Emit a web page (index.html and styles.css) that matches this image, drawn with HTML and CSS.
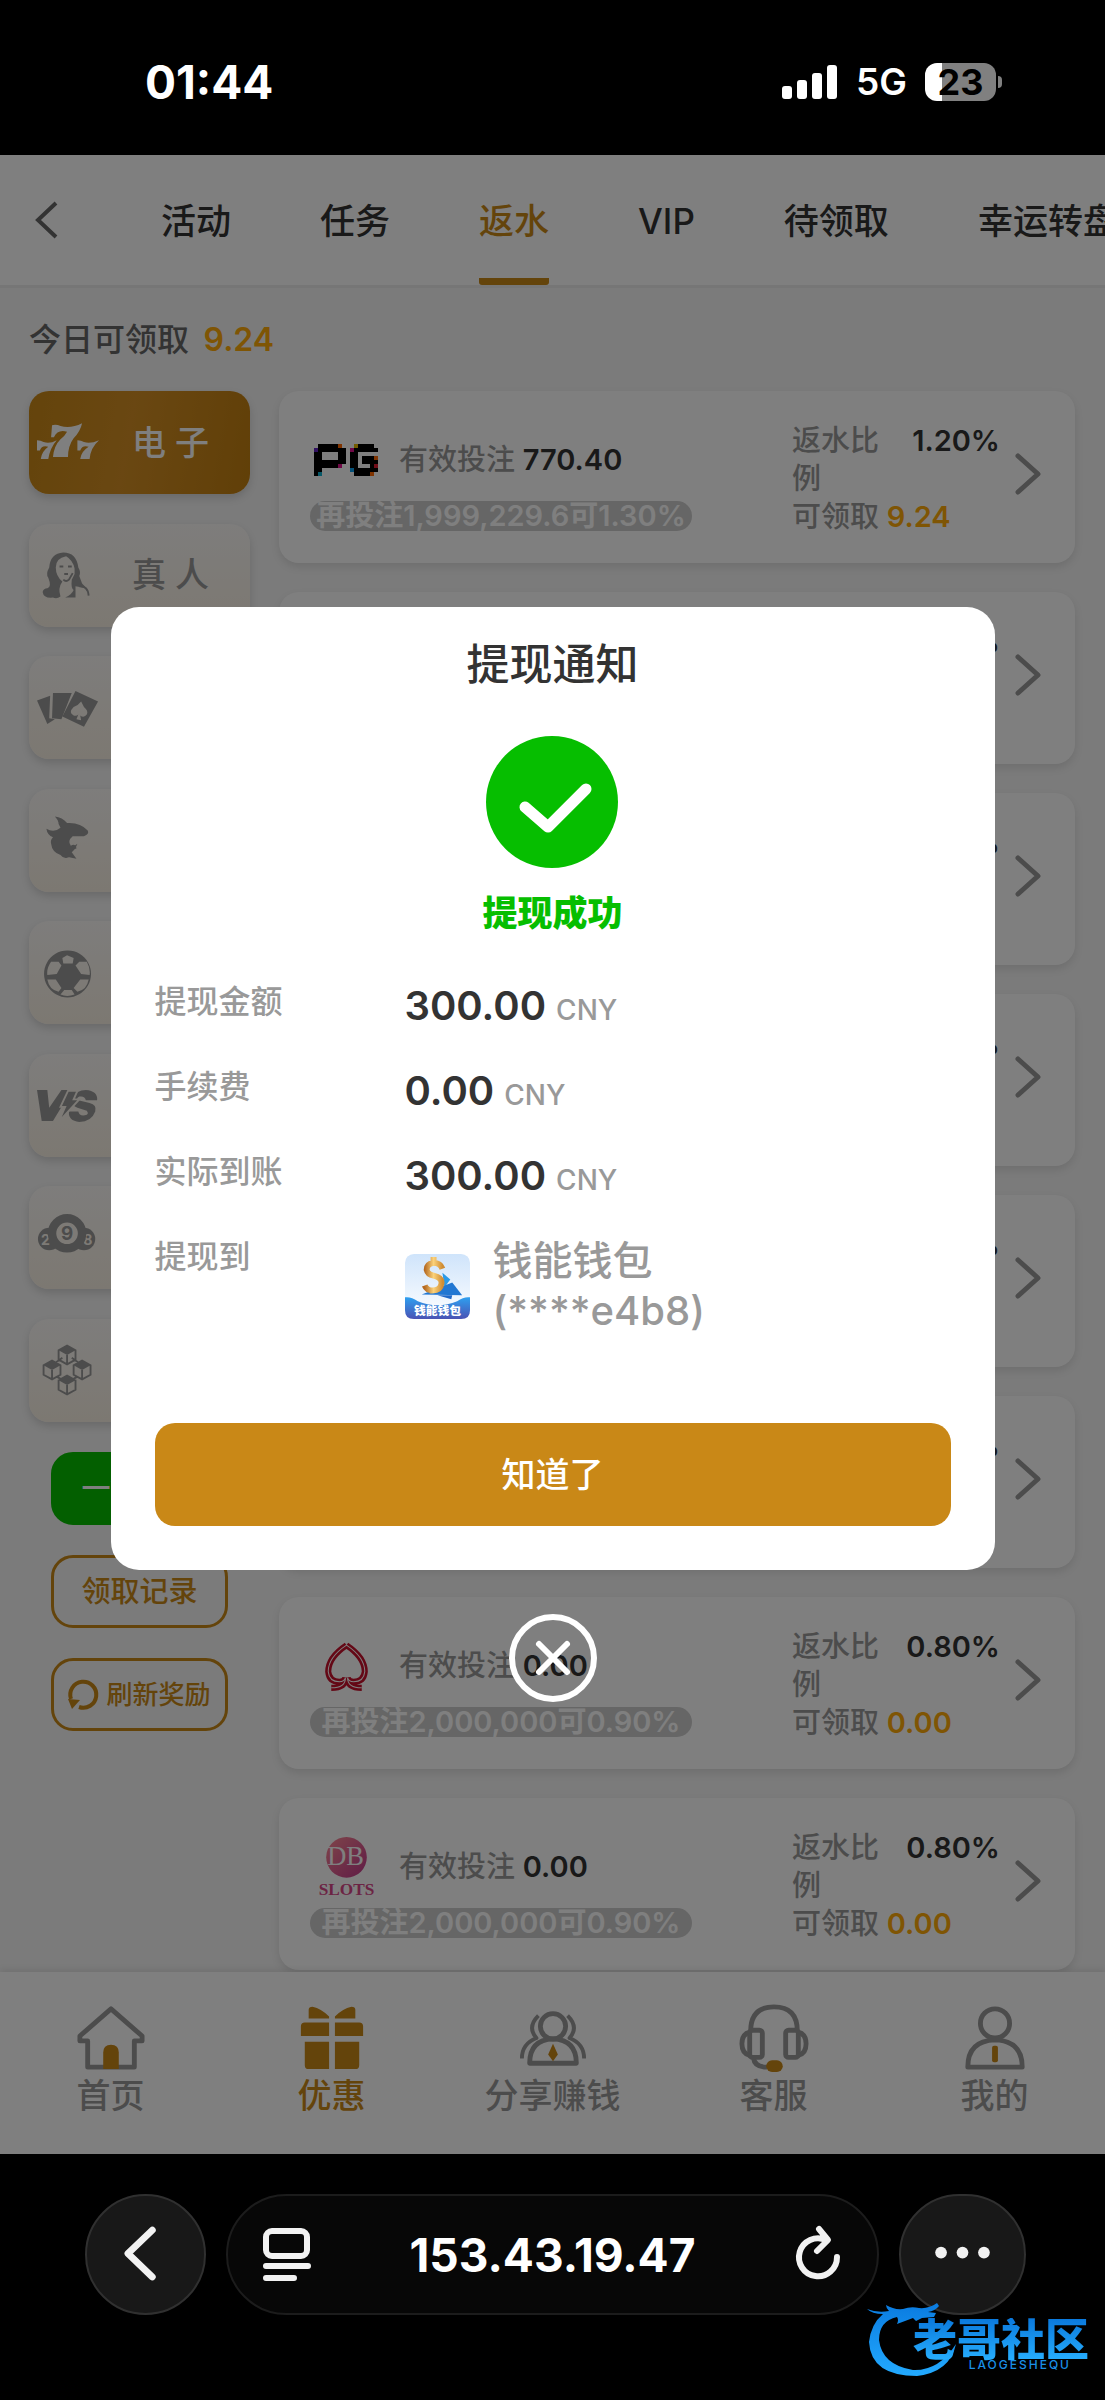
FILE: index.html
```html
<!doctype html>
<html lang="zh-CN">
 <head>
  <meta charset="utf-8">
  <meta name="viewport" content="width=device-width, initial-scale=1">
  <title>返水</title>
  <link rel="stylesheet" href="styles.css">
 </head>

 <body>
  <div class="statusbar">
    <span class="time">01:44</span>
    <span class="status">
      <svg class="signal" viewBox="0 0 56 34"><rect x="0" y="21" width="10" height="13" rx="3"/><rect x="15" y="15" width="10" height="19" rx="3"/><rect x="30" y="8" width="10" height="26" rx="3"/><rect x="45" y="0" width="10" height="34" rx="3"/></svg>
      <span class="net">5G</span>
      <span class="battery">23</span>
    </span>
  </div>

  <div class="app">
    <header class="tabs">
      <button class="back" aria-label="返回"><svg viewBox="0 0 24 38"><path d="M21 2 3 19l18 17"/></svg></button>
      <nav>
        <a href="#">活动</a><a href="#">任务</a><a href="#" class="on">返水</a><a href="#">VIP</a><a href="#">待领取</a><a href="#">幸运转盘</a>
      </nav>
    </header>

    <main>
      <p class="today">今日可领取 <b>9.24</b></p>
      <div class="columns">
        <aside>
          <div class="kinds" id="kinds"></div>
          <button class="act green">一键领取</button>
          <button class="act">领取记录</button>
          <button class="act small"><svg viewBox="0 0 32 32"><path d="M3 20a13 13 0 1 1 8 8"/><path class="tip" d="M0 20l12 1-8 9z"/></svg>刷新奖励</button>
        </aside>
        <div class="cards" id="cards"></div>
      </div>
    </main>

    <footer class="nav">
      <a href="#"><svg viewBox="0 0 72 72"><path d="M36 7 4 35v5h8v27h48V40h8v-5z"/><path class="gold" d="M28 69V52q0-8 8-8t8 8v17z"/></svg>首页</a>
      <a href="#" class="on"><svg viewBox="0 0 72 72"><g class="gold"><path d="M33 15V17H12V8q0-3 4-3 9 2 17 10zM39 15v2h21V8q0-3-4-3-9 2-17 10z"/><path d="M8 21h25v14H4V25q0-4 4-4zM39 21h25q4 0 4 4v10H39zM8 41h25v28H12q-4 0-4-4zM39 41h25v24q0 4-4 4H39z"/></g></svg>优惠</a>
      <a href="#"><svg viewBox="0 0 72 72"><circle cx="36" cy="25" r="13"/><path d="M12 63q0-24 24-25 24 1 24 25z"/><path class="thin" d="M21 14q-12 12-2 23Q4 43 4 58M51 14q12 12 2 23 15 6 15 21"/><path class="gold" d="M36 43l5 11-5 7-5-7z"/></svg>分享赚钱</a>
      <a href="#"><svg viewBox="0 0 72 72"><path d="M12 30Q12 5 36 5t24 25"/><rect x="11" y="29" width="13" height="28" rx="3"/><rect x="48" y="29" width="13" height="28" rx="3"/><path d="M11 31q-8 2-8 12t8 12M61 31q8 2 8 12t-8 12M15 58q1 9 14 9"/><rect class="gold" x="28" y="60" width="17" height="12" rx="6"/></svg>客服</a>
      <a href="#"><svg viewBox="0 0 72 72"><circle cx="36" cy="22" r="15"/><path d="M8 67q0-27 28-28 28 1 28 28z"/><rect class="gold" x="33" y="45" width="6" height="17" rx="2"/></svg>我的</a>
    </footer>

    <div class="overlay">
      <div class="modal" role="dialog" aria-labelledby="mtitle">
        <h2 id="mtitle">提现通知</h2>
        <svg class="ok" viewBox="0 0 133 133"><circle cx="66" cy="66" r="66"/><path d="M39 71l23 20 38-38"/></svg>
        <p class="oktext">提现成功</p>
        <dl>
          <dt>提现金额</dt><dd>300.00 <small>CNY</small></dd>
          <dt>手续费</dt><dd>0.00 <small>CNY</small></dd>
          <dt>实际到账</dt><dd>300.00 <small>CNY</small></dd>
          <dt>提现到</dt>
          <dd class="wallet">
            <svg viewBox="0 0 66 66">
              <defs>
                <linearGradient id="sky" x2="0" y2="1"><stop stop-color="#cfe4fb"/><stop offset="1" stop-color="#fff"/></linearGradient>
                <linearGradient id="sea" x2="0" y2="1"><stop stop-color="#2ea0f0"/><stop offset="1" stop-color="#4a52b4"/></linearGradient>
                <linearGradient id="coin"><stop stop-color="#b56a22"/><stop offset=".5" stop-color="#fbd27a"/><stop offset="1" stop-color="#d08d34"/></linearGradient>
              </defs>
              <rect width="66" height="66" rx="9" fill="url(#sky)"/>
              <path d="M38 19l8 7-6 8z" fill="#2a9ae8"/>
              <path d="M17 41l31-12 10 13z" fill="#2277d2"/>
              <path d="M38 15q-2-6-9-6-7 1-7 7 1 5 7 6 9 2 8 8-1 7-9 7-6 0-8-5M29 3v6M28 36v4" fill="none" stroke="url(#coin)" stroke-width="6"/>
              <path d="M33 42h15l-1 4z" fill="#1f68c8"/>
              <path d="M0 44q6-1 13 4 20 8 40 0 7-5 13-4v13q0 9-9 9H9q-9 0-9-9z" fill="url(#sea)"/>
              <text x="33" y="62" text-anchor="middle">钱能钱包</text>
            </svg>
            <span>钱能钱包<br>(****e4b8)</span>
          </dd>
        </dl>
        <button class="know">知道了</button>
      </div>
      <button class="close" aria-label="关闭"><svg viewBox="0 0 88 88"><circle cx="44" cy="44" r="41"/><path d="M30 30l28 28M58 30 30 58"/></svg></button>
    </div>
  </div>

  <div class="browser">
    <button class="round" aria-label="后退"><svg viewBox="0 0 120 120"><path d="M67 35 42 59l25 24"/></svg></button>
    <div class="address">
      <svg viewBox="0 0 46 54"><rect x="2" y="3" width="41" height="25" rx="6"/><path d="M2 38h42M2 50h28"/></svg>
      <span>153.43.19.47</span>
      <svg viewBox="0 0 46 54"><path d="M42 29a19 19 0 1 1-11-17M24 1l9 11-11 11"/></svg>
    </div>
    <button class="round" aria-label="更多"><svg viewBox="0 0 120 120"><g class="dots"><circle cx="38" cy="58" r="6"/><circle cx="60" cy="58" r="6"/><circle cx="82" cy="58" r="6"/></g></svg></button>
    <div class="mark">
      <svg viewBox="0 0 90 74">
        <defs><linearGradient id="blue" x2="0" y2="1"><stop stop-color="#0a7be0"/><stop offset="1" stop-color="#23aaff"/></linearGradient></defs>
        <path fill="url(#blue)" d="M0 7q10 4 22 2-3-3-3-6 8 5 17 4 8-3 16-1 10 1 18-5l2 3q-4 5-11 6l8 1-2 4-12 1-6 3-3-3-8 3-8 3q2-4 0-7Q12 19 12 38q3 25 34 30 26 1 43-26-6 28-39 32Q4 74 2 40 4 22 16 12 5 12 0 7z"/>
      </svg>
      <strong>老哥社区</strong>
      <span>LAOGESHEQU</span>
    </div>
  </div>

  <script>
	const kinds = [
		['电 子', '<path d="M16-1q5-1 9 1 11 3 23-3-2 9-9 16-6 8-6 20H17q1-12 8-19 5-4 7-8-10-3-14 6h-3z"/><path d="M0 15q4 0 7 2 7 2 14-2-7 8-9 20H4q1-8 8-13-7-2-9 4H0zM43 15q4 0 7 2 7 2 16-2-9 8-10 20H46q1-8 9-13-7-2-9 4h-3z"/>'],
		['真 人', '<path d="M28-6Q42-6 44 10q3 5 1 9l3 8q6 5 8 17h0q-2-13-9-13l-6-1v12H30q7-3 9-8-3-2-2-11l3-6V11q-2-9-9-13Q20 0 20 10q0 9 7 15-5 7-2 16-4 3-8 1-10 1-11-6 1-4 5-4 5-1 1-11Q9 17 13 10 14-5 28-6z"/><path class="ln" d="M24 9h4M33 9h4M29 17h4M28 23q3 3 6 0l4-7M45 30q9-1 10 10"/>'],
		['棋 牌', '<path d="M0 10l14-5-1 24 6 1-8 5zM17 2l20 0-11 28-10-1z"/><path fill-rule="evenodd" d="M41 0l24 11-15 27-23-11zM47 11q-3 4-8 6-6 6 0 9 3 1 5-1l-2 5 5 1-1-5q4 3 7-1 2-4-3-8z"/>'],
		['捕 鱼', '<path d="M19-7q8 1 13 7 14-1 22 8 2 4-4 6l-12 0q-6 5-2 10 5-3 6 3l-6 2q3 7-4 8-4 1-7-3-9-3-10-12-1-4 2-7-6-2-7-9 8 5 15-1l-2-4q0-4-4-8zM43 22q-2 6-6 9l5 7-9-2q1-9 10-14z"/>'],
		['体 育', '<path fill-rule="evenodd" d="M32-6a25 25 0 1 0 1 0zM32-1l7 3-1 6-10 0-1-6zM15 6l8 0 3 4-5 9-10 1q-1-7 4-14zM41 10l4-4 8 0q4 7 3 14l-9-1zM11 25l9 0 6 9-3 4q-10-2-12-13zM46 25h9q-2 11-12 13l-4-4zM29 36h8l3 5q-8 3-15 0z"/>'],
		['电 竞', '<path d="M0 2h11l2 19L26 2h11L17 35H5zM64 13H52q-1-5-7-4-4 2-1 4l12 3q8 2 6 9-4 11-17 11-12-1-11-11h10q1 5 7 4 5-1 2-5l-10-3q-8-3-5-10 4-9 14-9 13 1 12 11z"/><path class="bolt" d="M33 3h10l-4 9h6L23 36l7-16h-5z"/>'],
		['彩 票', '<circle cx="13" cy="19" r="12"/><circle cx="50" cy="19" r="12"/><text class="pale" x="9" y="25">2</text><text class="pale" x="54" y="25">8</text><circle class="ball" cx="32" cy="13" r="16"/><text x="32" y="20">9</text>'],
		['区 块 链', '<path d="M32-8l9 5-9 5-9-5zM16 8l9 5-9 5-9-5zM48 8l9 5-9 5-9-5zM32 24l9 5-9 5-9-5z"/><path class="ln" d="M23-3v10l9 5 9-5V-3l-9-5zM32 2v10M7 13v10l9 5 9-5V13l-9-5zM16 18v10M39 13v10l9 5 9-5V13l-9-5zM48 18v10M23 29v10l9 5 9-5V29l-9-5zM32 34v10M20 10l7-5M37 5l7 5M21 25l5 3M43 25l-5 3"/>']
	];

	// pixel lettering of the PG logo, one character per square
	const pixels = [
		'.kkkkko...ykkkk.',
		'pkkkkkkk.mkkkkkk',
		'kk....kk.kk.....',
		'kk....kk.kk.kkko',
		'kkkkkkkk.kk.kkkk',
		'kkkkkkm..kk...kr',
		'kk.......bkkkkkk',
		'kc........kkkko.'
	];
	const paint = { k: '#000', p: '#6020c0', o: '#f60', y: '#e8b800', m: '#e0108c', b: '#08a0f0', r: '#e01830', c: '#10b0d0' };

	function pgLogo() {
		let out = '<svg viewBox="0 0 65 65" shape-rendering="crispEdges">';
		pixels.forEach((row, y) => {
			[...row].forEach((ch, x) => {
				if (ch !== '.') {
					out += '<rect x="' + x * 4 + '" y="' + (16 + y * 4) + '" width="4" height="4" fill="' + paint[ch] + '"/>';
				}
			});
		});
		return out + '</svg>';
	}

	const spade = '<svg viewBox="0 0 64 64"><path class="spade" d="M32 11Q14 23 14 37q1 10 11 10 5 0 6-4 0 10-14 10M32 11q18 12 18 26-1 10-11 10-5 0-6-4 0 10 14 10"/><path class="spade in" d="M32 11Q14 23 14 37q1 10 11 10 5 0 6-4 0 10-14 10M32 11q18 12 18 26-1 10-11 10-5 0-6-4 0 10 14 10"/></svg>';
	const slots = '<svg viewBox="0 0 64 64"><defs><linearGradient id="db" x2="1" y2="1"><stop stop-color="#ff8a94"/><stop offset="1" stop-color="#c0388c"/></linearGradient></defs><circle cx="32" cy="22" r="20" fill="url(#db)"/><text class="db" x="31" y="30">DB</text><text class="slots" x="32" y="59">SLOTS</text></svg>';

	const cards = [
		{ logo: pgLogo(), bet: '770.40', next: '再投注1,999,229.6可1.30%', rate: '1.20%', get: '9.24' }
	];
	for (let i = 0; i < 7; i++) {
		cards.push({ logo: i === 6 ? slots : spade, bet: '0.00', next: '再投注2,000,000可0.90%', rate: '0.80%', get: '0.00' });
	}

	document.getElementById('kinds').innerHTML = kinds.map((k, i) =>
		'<button class="kind' + (i ? '' : ' on') + '"><svg viewBox="0 -10 66 56">' + k[1] + '</svg><span>' + k[0] + '</span></button>'
	).join('');

	document.getElementById('cards').innerHTML = cards.map((c) =>
		'<section class="card"><div class="bet"><div class="line">' + c.logo + '<span>有效投注 <b>' + c.bet + '</b></span></div>'
		+ '<div class="pill">' + c.next + '</div></div>'
		+ '<div class="rate"><div><span class="lab">返水比例</span><b>' + c.rate + '</b></div><p>可领取 <b class="amber">' + c.get + '</b></p></div>'
		+ '<svg class="go" viewBox="0 0 26 42"><path d="M3 3l20 18L3 39"/></svg></section>'
	).join('');
  </script>
 </body>
</html>
```

FILE: styles.css
```css
* { box-sizing: border-box; }
body { margin: 0; background: #000; color: #333; font: 500 29px/38px Inter, "Noto Sans CJK SC", sans-serif; }
button { font: inherit; color: inherit; background: none; border: 0; padding: 0; }
a { color: inherit; text-decoration: none; }
p, h2, dl, dd { margin: 0; }
b { font-weight: 600; }
svg { display: block; flex: none; overflow: visible; }

/* phone status bar */
.statusbar { height: 155px; padding: 8px 109px 0 145px; display: flex; align-items: center; justify-content: space-between; color: #fff; font-weight: 700; }
.time { font-size: 46px; }
.status { display: flex; align-items: center; gap: 18px; }
.signal { width: 56px; height: 34px; fill: #fff; }
.net { font-size: 37px; font-weight: 600; }
.battery { position: relative; width: 71px; height: 38px; border-radius: 12px; background: linear-gradient(90deg, #fff 24%, #808080 24%); color: #000; font-size: 36px; text-align: center; }
.battery::after { content: ""; position: absolute; left: 73px; top: 13px; width: 4px; height: 12px; border-radius: 0 4px 4px 0; background: #808080; }

.app { position: relative; background: #f6f6f6; height: 1999px; display: flex; flex-direction: column; overflow: hidden; }

.tabs { display: flex; flex: none; height: 133px; background: #fff; border-bottom: 3px solid #ececec; }
.back { width: 161px; padding-left: 35px; flex: none; }
.back svg { width: 24px; height: 38px; fill: none; stroke: #666; stroke-width: 4; }
.tabs nav { display: flex; gap: 89px; overflow: hidden; white-space: nowrap; font-size: 35px; line-height: 132px; }
.tabs a { flex: none; height: 130px; }
.tabs .on { color: #c98817; border-bottom: 7px solid #c98817; border-radius: 3px; }

main { flex: 1; min-height: 0; overflow: hidden; padding: 33px 30px 0 29px; }
.today { color: #666; font-size: 32px; line-height: 38px; }
.today b { color: #ffaa09; margin-left: 6px; }
.columns { display: flex; gap: 29px; margin-top: 32px; }

aside { width: 221px; flex: none; display: flex; flex-direction: column; align-items: center; gap: 30px; }
.kinds { width: 100%; height: 1031px; display: flex; flex-direction: column; justify-content: space-between; }
.kind { height: 103px; padding-left: 8px; border-radius: 20px; display: flex; align-items: center; background: linear-gradient(#fcfaf8, #f9f1e4); box-shadow: 0 4px 8px rgba(0,0,0,.14); color: #999; fill: #999; font-size: 34px; }
.kind svg { width: 62px; height: 56px; }
.kind span { flex: 1; text-align: center; padding-right: 8px; }
.kind .ln { fill: none; stroke: #999; stroke-width: 2; }
.kind .bolt { stroke: #faf5ec; stroke-width: 2; }
.kind .ball { fill: #faf5ec; stroke: #999; stroke-width: 9; }
.kind text { font-size: 20px; font-weight: 700; text-anchor: middle; }
.kind .pale { fill: #faf5ec; font-size: 15px; }
.kind.on { background: linear-gradient(100deg, #c98817, #d48f24 45%, #c27f10); color: #fff; fill: #fff; }
.act { width: 177px; height: 73px; border: 3px solid #c98817; border-radius: 22px; color: #c98817; display: flex; align-items: center; justify-content: center; gap: 6px; }
.act.green { background: #06be00; border-color: #06be00; color: #fff; }
.act.small { font-size: 26px; }
.act svg { width: 32px; height: 32px; fill: none; stroke: #c98817; stroke-width: 4; }
.act .tip { fill: #c98817; stroke: none; }

.cards { flex: 1; display: flex; flex-direction: column; gap: 29px; }
.card { height: 172px; flex: none; padding: 31px 34px 0 31px; border-radius: 20px; background: #fff; box-shadow: 0 4px 8px rgba(0,0,0,.1); display: flex; color: #999; }
.bet { width: 382px; }
.line { display: flex; align-items: center; height: 76px; gap: 20px; padding-left: 4px; }
.line svg { width: 65px; height: 65px; }
.card b { color: #333; }
.pill { height: 30px; margin-top: 3px; border-radius: 15px; line-height: 30px; text-align: center; white-space: nowrap; background: #ccc; color: #fff; font-weight: 600; }
.spade { fill: none; stroke: #c8102c; stroke-width: 6; }
.spade.in { stroke: #fff; stroke-width: 1; }
.db { fill: #fff; font: 26px "Liberation Serif", serif; text-anchor: middle; }
.slots { fill: #d84888; font: bold 17px "Liberation Serif", serif; text-anchor: middle; }
.rate { width: 208px; margin-left: 100px; }
.rate div { display: flex; justify-content: space-between; }
.lab { width: 88px; }
.card .amber { color: #ffaa09; }
.go { width: 26px; height: 42px; margin: 31px 0 0 auto; fill: none; stroke: #999; stroke-width: 5; stroke-linecap: round; stroke-linejoin: round; }

.nav { flex: none; height: 182px; padding-top: 30px; background: #fff; box-shadow: 0 -3px 6px rgba(0,0,0,.08); display: flex; color: #999; font-size: 34px; z-index: 1; }
.nav a { flex: 1; display: flex; flex-direction: column; align-items: center; gap: 5px; }
.nav svg { width: 70px; height: 70px; fill: none; stroke: #999; stroke-width: 5; stroke-linejoin: round; }
.nav .thin { stroke-width: 4; }
.nav .gold { fill: #c98817; stroke: none; }
.nav .on { color: #c98817; }

.overlay { position: absolute; inset: 0; z-index: 2; background: rgba(0,0,0,.5); display: flex; flex-direction: column; align-items: center; justify-content: center; gap: 44px; }
.modal { width: 80%; padding: 33px 44px 44px; border-radius: 28px; background: #fff; display: flex; flex-direction: column; align-items: center; }
.modal h2 { font-size: 43px; line-height: 48px; font-weight: 500; }
.ok { width: 133px; height: 133px; margin-top: 48px; fill: #06be00; }
.ok path { fill: none; stroke: #fff; stroke-width: 11; stroke-linecap: round; stroke-linejoin: round; }
.oktext { margin-top: 24px; color: #06be00; font-size: 35px; line-height: 40px; font-weight: 900; }
.modal dl { width: 100%; margin-top: 44px; display: grid; grid-template-columns: 250px 1fr; row-gap: 31px; }
.modal dt { color: #999; font-size: 32px; line-height: 50px; }
.modal dd { padding-top: 4px; font-size: 40px; line-height: 50px; font-weight: 600; }
.modal small { color: #999; font-size: 28px; line-height: 28px; font-weight: 500; }
.modal .wallet { display: flex; align-items: center; gap: 23px; color: #999; }
.wallet svg { width: 65px; height: 65px; }
.wallet span { font-weight: 500; }
.wallet text { fill: #fff; font-size: 12px; font-weight: 900; }
.know { width: 100%; height: 103px; margin-top: 87px; border-radius: 20px; background: #c98817; color: #fff; font-size: 34px; }
.close svg { width: 88px; height: 88px; fill: none; stroke: #fff; stroke-width: 6; stroke-linecap: round; }

/* browser toolbar */
.browser { position: relative; height: 246px; padding: 40px 79px 0 85px; display: flex; gap: 20px; color: #fff; }
.round { width: 121px; height: 121px; flex: none; border: 2px solid #303030; border-radius: 61px; background: #181818; }
.round:nth-of-type(2) { width: 127px; }
.round svg { width: 100%; height: 117px; fill: none; stroke: #f2f2f2; stroke-width: 7; stroke-linecap: round; stroke-linejoin: round; }
.round .dots { fill: #f2f2f2; stroke: none; }
.address { flex: 1; height: 121px; padding: 0 36px; border: 2px solid #1c1c1c; border-radius: 61px; background: #070707; display: flex; align-items: center; justify-content: space-between; font-size: 46px; font-weight: 700; }
.address svg { width: 46px; height: 54px; fill: none; stroke: #f2f2f2; stroke-width: 6; stroke-linecap: round; stroke-linejoin: round; }

/* site mark over the corner of the page */
.mark { position: absolute; right: 16px; bottom: 24px; width: 222px; height: 74px; }
.mark svg { position: absolute; left: 0; top: 0; width: 90px; height: 74px; }
.mark strong { position: absolute; right: 0; top: 16px; font-size: 44px; line-height: 44px; font-weight: 900; color: transparent; background: linear-gradient(#0a78dc, #28b0ff); background-clip: text; -webkit-background-clip: text; }
.mark span { position: absolute; right: 18px; top: 57px; font-size: 12px; line-height: 12px; letter-spacing: 2px; color: #1a90e8; }
```
